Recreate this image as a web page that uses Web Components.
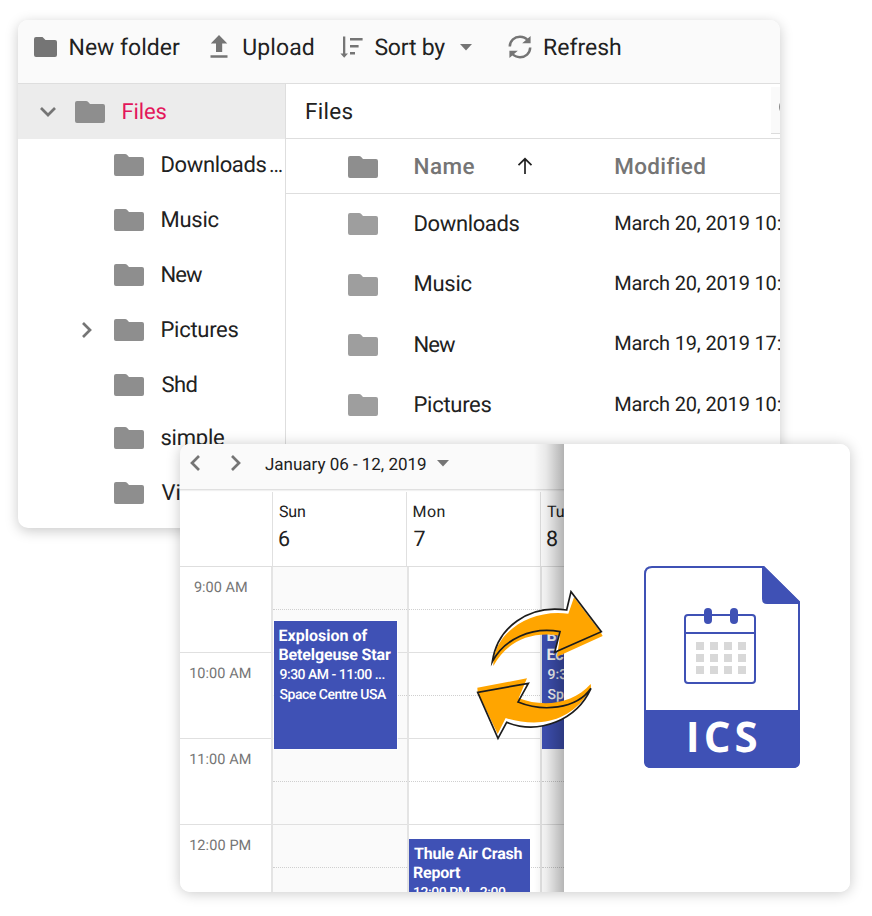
<!DOCTYPE html>
<html lang="en">
<head>
<meta charset="utf-8">
<title>File manager and calendar export</title>
<style>
html,body{margin:0;background:#fff}
body{width:872px;height:916px;overflow:hidden;font-family:Roboto,"Liberation Sans",sans-serif;color:#212121;text-rendering:geometricPrecision}
</style>
</head>
<body>
<app-stage>
  <file-manager slot="back"></file-manager>
  <calendar-export slot="front"></calendar-export>
</app-stage>
<script>
const define = (name, html, after) => customElements.define(name, class extends HTMLElement {
  connectedCallback() {
    if (this.shadowRoot) return;
    const t = document.createElement('template');
    t.innerHTML = typeof html === 'function' ? html(this) : html;
    this.attachShadow({ mode: 'open' }).append(t.content.cloneNode(true));
    if (after) after(this);
  }
});

/* Single-line label: "w" is the inked width the tracking is adjusted to. */
const ctx = document.createElement('canvas').getContext('2d');
ctx.textRendering = 'geometricPrecision';
define('ui-text', el => {
  const s = el.getAttribute('size') || 21, wt = el.getAttribute('weight') || 400;
  const text = el.textContent;
  ctx.font = `${wt} ${s}px Roboto`;
  const m = ctx.measureText(text);
  const w = +el.getAttribute('w');
  const ink = m.actualBoundingBoxRight + m.actualBoundingBoxLeft;
  const ls = w ? ((w - ink) / (text.length - 1)).toFixed(3) + 'px' : 'normal';
  return `<style>:host{display:block;white-space:pre;flex:none;font-size:${s}px;font-weight:${wt};
    letter-spacing:${ls};margin-left:${(m.actualBoundingBoxLeft + .5).toFixed(2)}px;line-height:var(--lh,1.2)}</style><slot></slot>`;
});

const icons = {
  folder: ['0 0 30 22', '<path fill="currentColor" d="M2 0H11Q12.400 0 13.200 .9L15 3H28Q30 3 30 5V20Q30 22 28 22H2Q0 22 0 20V2Q0 0 2 0Z"/>'],
  folderSmall: ['0 0 23 20', '<path fill="currentColor" d="M2 0H8.500L11.500 3H21Q23 3 23 5V18Q23 20 21 20H2Q0 20 0 18V2Q0 0 2 0Z"/>'],
  upload: ['0 0 18 24', '<path fill="currentColor" d="M9 0L17.300 8.500H12.200V17H6V8.500H.8ZM.5 20.200H17.500V22.700H.5Z"/>'],
  sort: ['0 0 24 22', '<g fill="currentColor"><path d="M3 .5H5.300V17.500H8L4.200 21.700L.4 17.500H3ZM10 2H22.600V4.600H10ZM10 9H18.600V11.600H10ZM10 16H15V18.600H10Z"/></g>'],
  refresh: ['0 0 24 24', '<g fill="none" stroke="currentColor" stroke-width="2.500"><path d="M1.800 11.500C2 5.500 6.500 1.800 12 1.800C15.500 1.800 18 3.200 20 5.500M22.200 12.500C22 18.500 17.500 22.200 12 22.200C8.500 22.200 6 20.800 4 18.500"/></g><path fill="currentColor" d="M22.600 1V8.300H14.200ZM1.400 23V15.700H9.800Z"/>'],
  caret: ['0 0 12 7', '<path fill="currentColor" d="M0 0H12L6 6.500Z"/>'],
  down: ['0 0 16 16', '<path fill="none" stroke="currentColor" stroke-width="2.700" d="M1 4L8 11L15 4"/>'],
  right: ['0 0 16 16', '<path fill="none" stroke="currentColor" stroke-width="2.700" d="M4 1L11 8L4 15"/>'],
  left: ['0 0 16 16', '<path fill="none" stroke="currentColor" stroke-width="2.700" d="M12 1L5 8L12 15"/>'],
  none: ['0 0 16 16', ''],
  up: ['0 0 16 18', '<path fill="none" stroke="#212121" stroke-width="1.700" d="M8 17V2M1.500 8.200L8 1.800L14.500 8.200"/>']
};
define('ui-icon', el => {
  const [vb, body] = icons[el.getAttribute('name')];
  const [, , w, h] = vb.split(' ');
  return `<style>:host{display:block;flex:none;width:${w}px;height:${h}px;color:#757575}svg{display:block}</style>
  <svg width="${w}" height="${h}" viewBox="${vb}">${body}</svg>`;
});

define('app-stage', `<style>
  :host{display:grid;grid-template:916px/872px}
  ::slotted(*){grid-area:1/1}
  ::slotted([slot=back]){margin:20px 0 0 18px}
  ::slotted([slot=front]){margin:444px 0 0 180px}
</style><slot name="back"></slot><slot name="front"></slot>`);

define('tree-item', el => `<style>
  :host{display:flex;align-items:center;box-sizing:border-box;height:54px;margin-bottom:1px;padding-left:61px}
  :host([root]){height:55px;margin:0;padding-left:22px;background:#ececec;color:#e3165b}
  .f{margin:0 17px 0 19px;color:#8e8e8e}
  ::slotted(ui-text){padding-top:3px}
</style><ui-icon name="${el.getAttribute('arrow') || 'none'}"></ui-icon><ui-icon class="f" name="folder"></ui-icon><slot></slot>`);

define('file-row', `<style>
  :host{display:grid;grid-template-columns:66px 200.700px 1fr;align-items:center;padding-left:62px;height:60.400px}
  ui-icon{color:#9e9e9e}
  :host([head]) ui-icon{color:#8e8e8e;margin-top:1px}
  :host([head]){height:54px;border-bottom:1px solid #dedede;color:#757575}
  ::slotted(ui-text:not([slot])){padding-top:1.500px}
  :host([head]) ::slotted(ui-text){padding-top:3px}
  ::slotted([slot=date]){position:relative;top:-1.500px}
</style><ui-icon name="folder"></ui-icon><slot></slot><slot name="date"></slot>`);

define('file-manager', `<style>
  :host{display:block;box-sizing:border-box;width:762px;height:508px;border-radius:10px;background:#fff;box-shadow:0 3px 13px rgba(0,0,0,.21);overflow:hidden}
  .bar{display:flex;align-items:center;height:63px;padding:0 0 9px 16px;box-sizing:border-box;background:#fafafa;border-bottom:0}
  .bar ui-text{padding-top:2px}
  .main{display:grid;grid-template-columns:267px 1fr;height:444px;border-top:1px solid #dedede}
  .right{border-left:1px solid #dedede;min-width:0;overflow:hidden}
  .crumb{display:flex;align-items:center;justify-content:space-between;height:54px;padding-left:19.500px;border-bottom:1px solid #dedede}
  .crumb ui-text{padding-top:2px}
  .search{width:9px;height:46px;background:#fafafa;border-bottom:1.500px solid #dcdcdc;overflow:hidden;margin-top:-2px}
  .search i{display:block;width:14px;height:14px;border:2px solid #888;border-radius:50%;margin:11px 0 0 7.500px}
  .name{display:flex;align-items:center;gap:42px}
  .name ui-text{padding-top:3px}
</style>
<div class="bar">
  <ui-icon name="folderSmall"></ui-icon><ui-text size="23" w="110.500" style="padding-left:12px">New folder</ui-text>
  <ui-icon name="upload" style="margin-left:30px"></ui-icon><ui-text size="23" w="70.500" style="padding-left:15px">Upload</ui-text>
  <ui-icon name="sort" style="margin-left:25px"></ui-icon><ui-text size="23" w="71" style="padding-left:10px">Sort by</ui-text>
  <ui-icon name="caret" style="margin-left:15px"></ui-icon>
  <ui-icon name="refresh" style="margin-left:36px"></ui-icon><ui-text size="23" w="77" style="padding-left:11.500px">Refresh</ui-text>
</div>
<div class="main">
  <div class="tree">
    <tree-item root arrow="down"><ui-text size="22" w="44">Files</ui-text></tree-item>
    <tree-item style="height:52px;margin-bottom:2px"><ui-text size="22" w="105">Downloads</ui-text><ui-text size="21" style="padding-left:3px;letter-spacing:-1px">…</ui-text></tree-item>
    <tree-item><ui-text size="22" w="57">Music</ui-text></tree-item>
    <tree-item><ui-text size="22" w="41.500">New</ui-text></tree-item>
    <tree-item arrow="right"><ui-text size="22" w="77">Pictures</ui-text></tree-item>
    <tree-item style="margin-bottom:0"><ui-text size="22" w="35">Shd</ui-text></tree-item>
    <tree-item style="height:52px;margin-bottom:2px"><ui-text size="22" w="62.500">simple</ui-text></tree-item>
    <tree-item><ui-text size="22">Vi</ui-text></tree-item>
  </div>
  <div class="right">
    <div class="crumb"><ui-text size="22.500" w="46.500">Files</ui-text><div class="search"><i></i></div></div>
    <file-row head><div class="name"><ui-text size="22.500" weight="500" w="60">Name</ui-text><ui-icon name="up"></ui-icon></div><ui-text size="22.500" weight="500" w="89.500">Modified</ui-text></file-row>
    <file-row><ui-text size="22" w="105">Downloads</ui-text><ui-text size="20" slot="date" w="165.500">March 20, 2019 10:</ui-text></file-row>
    <file-row><ui-text size="22" w="57">Music</ui-text><ui-text size="20" slot="date" w="165.500">March 20, 2019 10:</ui-text></file-row>
    <file-row><ui-text size="22" w="41.500">New</ui-text><ui-text size="20" slot="date" w="165.500">March 19, 2019 17:</ui-text></file-row>
    <file-row><ui-text size="22" w="77">Pictures</ui-text><ui-text size="20" slot="date" w="165.500">March 20, 2019 10:</ui-text></file-row>
  </div>
</div>`);

define('calendar-event', `<style>
  :host{display:block;box-sizing:border-box;background:#3f51b5;color:#fff;padding:5px 0 0 5px;overflow:hidden;--lh:19px;box-shadow:0 0 0 1px rgba(255,255,255,.7)}
  .m{--lh:20.300px;padding-top:.7px}
</style><slot></slot><div class="m"><slot name="meta"></slot></div>`);

define('day-column', `<style>
  :host{display:grid;grid-template:1fr/1fr;grid-auto-flow:row;box-sizing:border-box;border-left:2px solid #e4e4e4;min-height:0;overflow:hidden}
  :host([weekend]){background:#fafafa}
  .lines,::slotted(*){grid-area:1/1}
  .h{height:43px;box-sizing:border-box;border-bottom:1px dotted #cfcfcf}
  .h:nth-child(even){border-bottom:1px solid #e0e0e0}
</style><div class="lines"><div class="h"></div><div class="h"></div><div class="h"></div><div class="h"></div><div class="h"></div><div class="h"></div><div class="h"></div><div class="h"></div></div><slot></slot>`);

define('week-calendar', `<style>
  :host{display:flex;flex-direction:column;width:384px;height:448px;background:#fff;overflow:hidden}
  .nav{display:flex;align-items:center;height:46px;flex:none;box-sizing:border-box;padding:0 0 7px 6.500px;background:#fafafa;border-bottom:1px solid #e0e0e0;box-shadow:0 1px 1px #f1f1f1}
  .nav ui-text{padding-top:4px}
  .days{display:grid;grid-template-columns:91.500px 134.500px 133.500px 1fr;height:77px;flex:none;box-sizing:border-box;padding-top:2px;border-bottom:1px solid #dedede}
  .days div+div{border-left:1.500px solid #e0e0e0;padding:11px 0 0 6px;--lh:18px}
  .days div+div ui-text+ui-text{--lh:38px}
  .body{display:grid;grid-template-columns:91px 135.500px 133.500px 1fr;flex:none;height:325px}
  .time{display:flex;justify-content:center;align-items:center;box-sizing:border-box;height:86px;border-bottom:1px solid #e0e0e0;padding:0 10px 44px 0;color:#757575}
  .times{overflow:hidden}
</style>
<div class="nav"><ui-icon name="left"></ui-icon><ui-icon name="right" style="margin-left:25px"></ui-icon><ui-text size="17" w="161" style="padding-left:21px">January 06 - 12, 2019</ui-text><ui-icon name="caret" style="margin-left:10.500px"></ui-icon></div>
<div class="days"><div></div>
  <div><ui-text size="16" w="26">Sun</ui-text><ui-text size="21.500">6</ui-text></div>
  <div><ui-text size="16" w="31">Mon</ui-text><ui-text size="21.500">7</ui-text></div>
  <div><ui-text size="16">Tue</ui-text><ui-text size="21.500">8</ui-text></div>
</div>
<div class="body">
  <div class="times">
    <div class="time"><ui-text size="14.500" w="53">9:00 AM</ui-text></div>
    <div class="time"><ui-text size="14.500" w="60.500">10:00 AM</ui-text></div>
    <div class="time"><ui-text size="14.500" w="60.500">11:00 AM</ui-text></div>
    <div class="time"><ui-text size="14.500" w="60.500">12:00 PM</ui-text></div>
  </div>
  <day-column weekend><calendar-event style="margin:54px 10px 0 1px;height:128px"><ui-text size="16" weight="700" w="88">Explosion of</ui-text><ui-text size="16" weight="700" w="111.500">Betelgeuse Star</ui-text><ui-text slot="meta" size="14" weight="500" w="105">9:30 AM - 11:00 ...</ui-text><ui-text slot="meta" size="14" weight="500" w="107.500">Space Centre USA</ui-text></calendar-event></day-column>
  <day-column><calendar-event style="margin:272px 10.500px 0 0;height:53px"><ui-text size="16" weight="700" w="108.500">Thule Air Crash</ui-text><ui-text size="16" weight="700" w="47">Report</ui-text><ui-text slot="meta" size="14" weight="500" w="92">12:00 PM - 2:00</ui-text></calendar-event></day-column>
  <day-column><calendar-event style="margin:54px 0 0 0;height:128px"><ui-text size="16" weight="700">Blue Moon</ui-text><ui-text size="16" weight="700">Eclipse</ui-text><ui-text slot="meta" size="14" weight="500">9:30 AM</ui-text><ui-text slot="meta" size="14" weight="500">Space</ui-text></calendar-event></day-column>
</div>`);

define('ics-file', `<style>:host{display:block;width:156px;height:202px}svg{display:block}</style>
<svg width="156" height="202" viewBox="0 0 156 202">
  <path d="M8 1H119.500L155 36.500V194Q155 201 148 201H8Q1 201 1 194V8Q1 1 8 1Z" fill="#fff" stroke="#3f51b5" stroke-width="2"/>
  <path d="M118 0H120L156 35.500V38H123Q118 38 118 33Z" fill="#3f51b5"/>
  <path d="M0 144H156V195Q156 202 149 202H7Q0 202 0 195Z" fill="#3f51b5"/>
  <g fill="none" stroke="#3f51b5" stroke-width="2"><rect x="41" y="49" width="70" height="68" rx="3"/><path d="M41 67H111"/></g>
  <g fill="#3f51b5"><rect x="60" y="42" width="8" height="16" rx="4"/><rect x="86" y="42" width="8" height="16" rx="4"/></g>
  <path fill="#d8d8d8" d="M52 76h8v8h-8zM66 76h8v8h-8zM80 76h8v8h-8zM94 76h8v8h-8zM52 88h8v8h-8zM66 88h8v8h-8zM80 88h8v8h-8zM94 88h8v8h-8zM52 100h8v8h-8zM66 100h8v8h-8zM80 100h8v8h-8zM94 100h8v8h-8z"/>
  <text x="41.800" y="186" font-family="Open Sans" font-weight="700" font-size="42" letter-spacing="4" fill="#fff">ICS</text>
</svg>`);

define('sync-arrows', `<style>:host{display:block;width:160px;height:190px}svg{display:block}</style>
<svg width="160" height="190" viewBox="0 0 480 570">
  <g fill="#fff"><path d="M97 275C112 173 205 103 320 120L333 65L424 185L284 247L300 185C215 169 132 207 97 275Z"/><path d="M393 355C350 450 238 496 140 457L114 505L53 367L205 340L174 396C245 425 348 420 393 355Z"/></g>
  <g fill="#ffa500"><path d="M100 288C96 195 205 115 325 131L342 82L421 185L428 198L291 260L300 197C210 183 140 215 100 288Z"/><path d="M392 342C395 355 390 365 384 370C325 460 230 472 137 444L113 492L53 367L52 353L201 325L176 385C250 413 340 402 392 342Z"/></g>
  <g fill="none" stroke="#1c1c1c" stroke-width="5" stroke-miterlimit="8"><path d="M97 275C112 173 205 103 320 120L333 65L424 185L284 247L300 185C215 169 132 207 97 275Z"/><path d="M393 355C350 450 238 496 140 457L114 505L53 367L205 340L174 396C245 425 348 420 393 355Z"/></g>
</svg>`);

define('calendar-export', `<style>
  :host{display:block;position:relative;width:670px;height:448px}
  .card{display:flex;height:448px;border-radius:10px;overflow:hidden}
  :host{border-radius:10px;background:#fff;box-shadow:0 1px 14px rgba(0,0,0,.22)}
  .left{display:grid;width:384px}
  .left>*{grid-area:1/1}
  .shade{justify-self:end;width:30px;z-index:1;background:linear-gradient(90deg,rgba(0,0,0,0),rgba(0,0,0,.07) 40%,rgba(0,0,0,.29))}
  .right{flex:1;background:#fff;display:flex;justify-content:center;padding:122px 0 0 30px}
  sync-arrows{position:absolute;left:280px;top:126px;z-index:2}
</style>
<div class="card"><div class="left"><week-calendar></week-calendar><div class="shade"></div></div><div class="right"><ics-file></ics-file></div></div>
<sync-arrows></sync-arrows>`);
</script>
</body>
</html>
